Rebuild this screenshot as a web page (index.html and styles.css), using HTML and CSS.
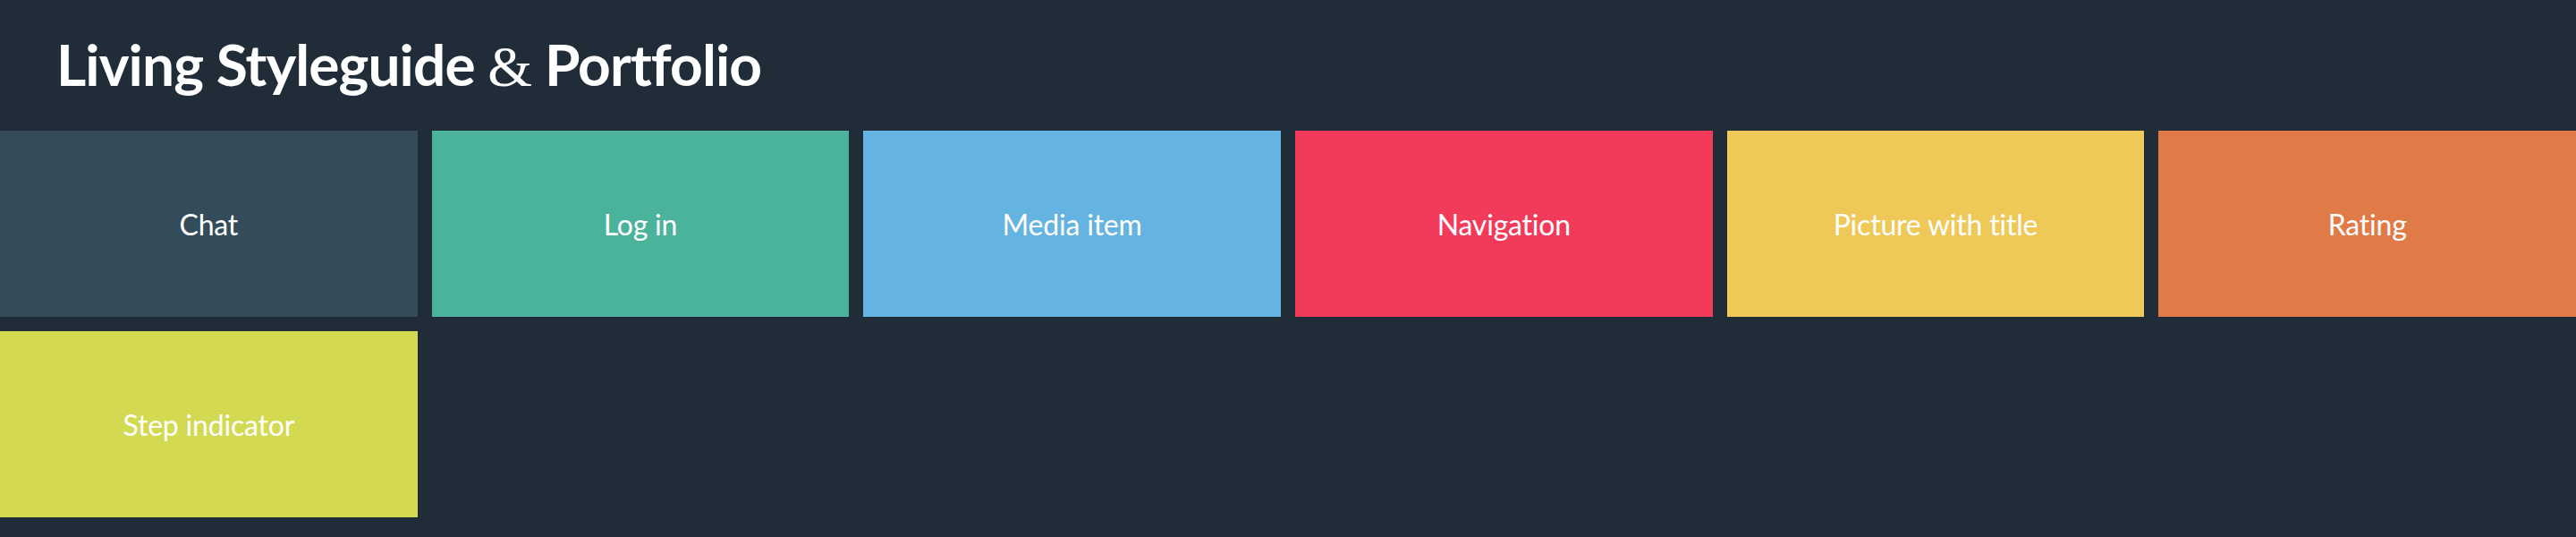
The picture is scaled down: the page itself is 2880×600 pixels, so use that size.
FILE: index.html
```html
<!DOCTYPE html>
<html lang="en">
<head>
<meta charset="utf-8">
<title>Living Styleguide &amp; Portfolio</title>
<link rel="stylesheet" href="styles.css">
</head>
<body>
<header class="header">
  <h1 class="title">Living Styleguide <span class="amp">&amp;</span> Portfolio</h1>
</header>
<main class="tiles">
  <a class="tile tile-chat" href="#">Chat</a>
  <a class="tile tile-login" href="#">Log in</a>
  <a class="tile tile-media" href="#">Media item</a>
  <a class="tile tile-nav" href="#">Navigation</a>
  <a class="tile tile-picture" href="#">Picture with title</a>
  <a class="tile tile-rating" href="#">Rating</a>
  <a class="tile tile-step" href="#">Step indicator</a>
</main>
</body>
</html>
```
FILE: styles.css
```css
html, body {
  margin: 0;
  padding: 0;
  background: #212c39;
  height: 100%;
}
body {
  font-family: Lato, "Open Sans", "Liberation Sans", sans-serif;
  color: #fff;
}
.header {
  height: 146px;
  display: flex;
  align-items: center;
  padding-left: 63px;
}
.title {
  margin: 0;
  font-size: 64px;
  font-weight: 700;
  line-height: 1;
  letter-spacing: -0.9px;
}
.amp {
  font-family: "Liberation Serif", "DejaVu Serif", serif;
  font-weight: 400;
}
.tiles {
  display: grid;
  grid-template-columns: repeat(6, 1fr);
  grid-auto-rows: 208px;
  gap: 16px;
}
.tile {
  display: flex;
  align-items: center;
  justify-content: center;
  color: #fff;
  text-decoration: none;
  font-size: 32px;
  letter-spacing: -0.2px;
}
.tile-chat { background: #344c5a; }
.tile-login { background: #4bb29c; }
.tile-media { background: #65b3e0; }
.tile-nav { background: #f23b5b; }
.tile-picture { background: #eec958; }
.tile-rating { background: #e07b48; }
.tile-step { background: #d3d951; }
```
